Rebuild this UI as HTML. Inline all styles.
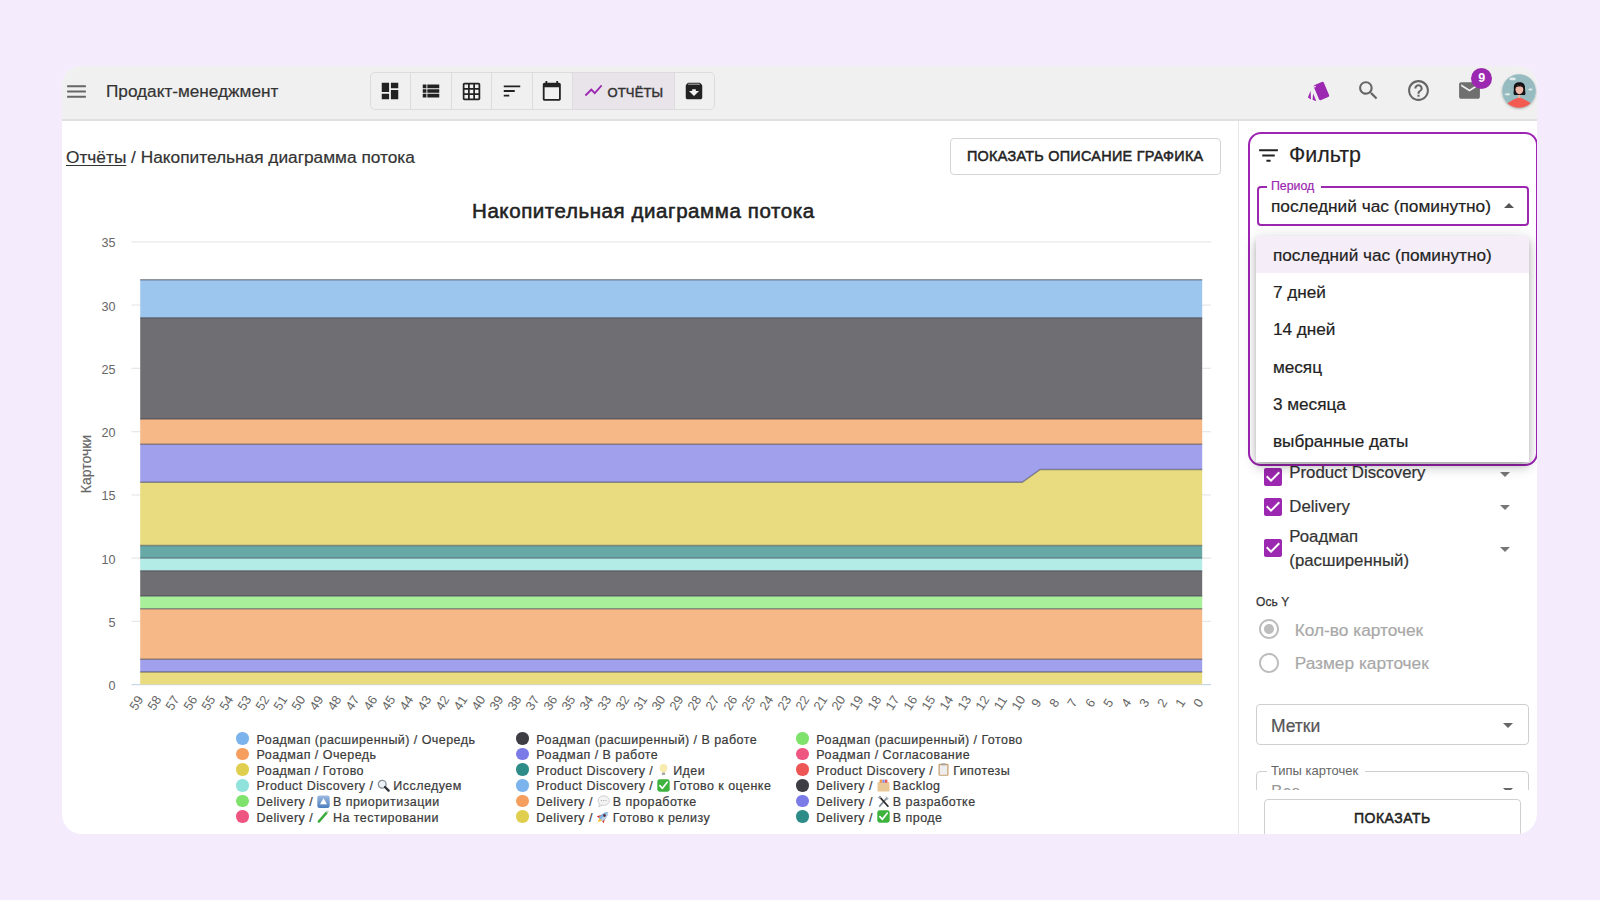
<!DOCTYPE html><html><head><meta charset="utf-8"><style>
*{margin:0;padding:0;box-sizing:border-box}
html,body{width:1600px;height:900px;overflow:hidden;background:#F4EBFC;font-family:"Liberation Sans",sans-serif;color:#222}
#win{position:absolute;left:62px;top:66px;width:1475px;height:768px;border-radius:20px;overflow:hidden;background:#fff}
.a{position:absolute}
.t{position:absolute;white-space:nowrap;line-height:1}
svg{position:absolute;overflow:visible}
</style></head><body><div id="win">
<div class="a" style="left:0.00px;top:0.00px;width:1475.00px;height:53.00px;background:#EFF0EF"></div>
<div class="a" style="left:0.00px;top:53.00px;width:1475.00px;height:2.00px;background:#DFE0DF"></div>
<svg style="left:2.00px;top:12.50px" width="25" height="25" viewBox="0 0 24 24"><path d="M3 18h18v-2H3v2zm0-5h18v-2H3v2zm0-7v2h18V6H3z" fill="#666"/></svg>
<div class="t" style="left:44.00px;top:17.34px;font-size:17.2px;color:#333;font-weight:400;letter-spacing:0px;-webkit-text-stroke:0.2px #333">Продакт-менеджмент</div>
<div class="a" style="left:308.00px;top:6.00px;width:344.50px;height:37.50px;border:1px solid #DCDCDC;border-radius:5px"></div>
<div class="a" style="left:510.50px;top:6.50px;width:102.00px;height:36.50px;background:#E9E4EA"></div>
<div class="a" style="left:347.80px;top:6.50px;width:1.00px;height:36.50px;background:#DCDCDC"></div>
<div class="a" style="left:388.80px;top:6.50px;width:1.00px;height:36.50px;background:#DCDCDC"></div>
<div class="a" style="left:429.00px;top:6.50px;width:1.00px;height:36.50px;background:#DCDCDC"></div>
<div class="a" style="left:469.60px;top:6.50px;width:1.00px;height:36.50px;background:#DCDCDC"></div>
<div class="a" style="left:510.20px;top:6.50px;width:1.00px;height:36.50px;background:#DCDCDC"></div>
<div class="a" style="left:612.20px;top:6.50px;width:1.00px;height:36.50px;background:#DCDCDC"></div>
<svg style="left:317.00px;top:13.50px" width="22" height="22" viewBox="0 0 24 24"><path d="M3 13h8V3H3v10zm0 8h8v-6H3v6zm10 0h8V11h-8v10zm0-18v6h8V3h-8z" fill="#222"/></svg>
<svg style="left:358.00px;top:14.00px" width="22" height="22" viewBox="0 0 24 24"><path d="M3 14h4v-4H3v4zm0 5h4v-4H3v4zM3 9h4V5H3v4zm5 5h13v-4H8v4zm0 5h13v-4H8v4zM8 5v4h13V5H8z" fill="#222"/></svg>
<svg style="left:398.50px;top:14.50px" width="21" height="21" viewBox="0 0 24 24"><path d="M20 2H4c-1.1 0-2 .9-2 2v16c0 1.1.9 2 2 2h16c1.1 0 2-.9 2-2V4c0-1.1-.9-2-2-2zM8 20H4v-4h4v4zm0-6H4v-4h4v4zm0-6H4V4h4v4zm6 12h-4v-4h4v4zm0-6h-4v-4h4v4zm0-6h-4V4h4v4zm6 12h-4v-4h4v4zm0-6h-4v-4h4v4zm0-6h-4V4h4v4z" fill="#222"/></svg>
<svg style="left:439.00px;top:13.50px" width="22" height="22" viewBox="0 0 24 24"><path d="M3 18h6v-2H3v2zM3 6v2h18V6H3zm0 7h12v-2H3v2z" fill="#222"/></svg>
<svg style="left:479.20px;top:13.60px" width="21.6" height="21.6" viewBox="0 0 24 24"><path d="M20 3h-1V1h-2v2H7V1H5v2H4c-1.1 0-2 .9-2 2v16c0 1.1.9 2 2 2h16c1.1 0 2-.9 2-2V5c0-1.1-.9-2-2-2zm0 18H4V8h16v13z" fill="#222"/></svg>
<svg style="left:520.50px;top:14.00px" width="21" height="21" viewBox="0 0 24 24"><path d="M3.5 18.49l6-6.01 4 4L22 6.92l-1.41-1.41-7.09 7.97-4-4L2 16.99z" fill="#9C27B0"/></svg>
<div class="t" style="left:545.50px;top:19.90px;font-size:13px;color:#333;font-weight:400;letter-spacing:0.15px;-webkit-text-stroke:0.5px #333">ОТЧЁТЫ</div>
<svg style="left:621.00px;top:14.00px" width="22" height="22" viewBox="0 0 24 24"><path d="M20.54 5.23l-1.39-1.68C18.88 3.21 18.47 3 18 3H6c-.47 0-.88.21-1.16.55L3.46 5.23C3.17 5.57 3 6.02 3 6.5V19c0 1.1.9 2 2 2h14c1.1 0 2-.9 2-2V6.5c0-.48-.17-.93-.46-1.27zM12 17.5L6.5 12H10v-2h4v2h3.5L12 17.5zM5.12 5l.81-1h12l.94 1H5.12z" fill="#222"/></svg>
<svg style="left:1238px;top:8px" width="40" height="32" viewBox="1300 74 40 32"><rect x="1316" y="82.75" width="10.9" height="16.5" rx="1.6" fill="#9C27B0" transform="rotate(-23 1321.4 91)"/><path d="M1310.6 90.8 L1307.9 97.4 L1311.0 99.4 Z" fill="#9C27B0"/><path d="M1313.1 93.4 L1312.6 99.8 L1316.3 101.2 Z" fill="#9C27B0"/><rect x="1314" y="85.8" width="1.8" height="1.6" fill="#E6CCEB" transform="rotate(-23 1314.9 86.6)"/></svg>
<svg style="left:1294.30px;top:12.30px" width="25" height="25" viewBox="0 0 24 24"><path d="M15.5 14h-.79l-.28-.27C15.41 12.59 16 11.11 16 9.5 16 5.91 13.09 3 9.5 3S3 5.91 3 9.5 5.91 16 9.5 16c1.61 0 3.09-.59 4.23-1.57l.27.28v.79l5 4.99L20.49 19l-4.99-5zm-6 0C7.01 14 5 11.99 5 9.5S7.01 5 9.5 5 14 7.01 14 9.5 11.99 14 9.5 14z" fill="#666"/></svg>
<svg style="left:1344.00px;top:11.80px" width="25" height="25" viewBox="0 0 24 24"><path d="M11 18h2v-2h-2v2zm1-16C6.48 2 2 6.48 2 12s4.48 10 10 10 10-4.48 10-10S17.52 2 12 2zm0 18c-4.41 0-8-3.59-8-8s3.59-8 8-8 8 3.59 8 8-3.59 8-8 8zm0-14c-2.21 0-4 1.79-4 4h2c0-1.1.9-2 2-2s2 .9 2 2c0 2-3 1.75-3 5h2c0-2.25 3-2.5 3-5 0-2.21-1.79-4-4-4z" fill="#666"/></svg>
<svg style="left:1394.90px;top:12.40px" width="25" height="25" viewBox="0 0 24 24"><path d="M20 4H4c-1.1 0-1.99.9-1.99 2L2 18c0 1.1.9 2 2 2h16c1.1 0 2-.9 2-2V6c0-1.1-.9-2-2-2zm0 4l-8 5-8-5V6l8 5 8-5v2z" fill="#6f6f6f"/></svg>
<div class="a" style="left:1409.2px;top:2.200000000000003px;width:21px;height:21px;border-radius:50%;background:#9C27B0;color:#fff;font-size:12.5px;font-weight:700;line-height:21px;text-align:center">9</div>
<svg style="left:1439.7px;top:8px" width="34" height="34" viewBox="0 0 34 34"><defs><clipPath id="av"><circle cx="17" cy="17" r="16.8"/></clipPath><filter id="avs" x="-30%" y="-30%" width="160%" height="160%"><feDropShadow dx="0" dy="1" stdDeviation="1" flood-opacity="0.3"/></filter></defs><circle cx="17" cy="17" r="16.8" fill="#96BCC1" filter="url(#avs)"/><g clip-path="url(#av)"><path d="M3.5 30.5 Q10 25.5 17 23.2 Q24 25.5 30.5 30.5 L30.5 36 L3.5 36 Z" fill="#F25A52"/><path d="M16.2 19 h2 v5 h-2z" fill="#F2B0A0"/><path d="M12.8 21.2 C10.5 20.5 12.2 17 11.8 14 C11.6 10 13.8 8.3 17.3 8.3 C21 8.3 23.2 10.2 23 14 C22.8 17 24.5 20.5 22.2 21.2 C20 21 15 21 12.8 21.2 Z" fill="#141214"/><ellipse cx="17.4" cy="15.6" rx="3.9" ry="4.6" fill="#F0B8A8"/><path d="M13.3 13.5 C14 10.5 20.5 10 21.5 13.5 C19.5 12 15.5 12 13.3 13.5Z" fill="#141214"/><ellipse cx="10.6" cy="4.9" rx="3.2" ry="1.3" fill="#E3EDEB"/><ellipse cx="28.5" cy="15.4" rx="2.1" ry="1.0" fill="#E3EDEB"/><ellipse cx="5.5" cy="20.3" rx="2.8" ry="1.1" fill="#E3EDEB"/></g></svg>
<div class="t" style="left:4.00px;top:82.76px;font-size:17.3px;color:#333;font-weight:400;letter-spacing:0px;-webkit-text-stroke:0.2px #333"><span style="text-decoration:underline;text-underline-offset:2px">Отчёты</span> / Накопительная диаграмма потока</div>
<div class="a" style="left:888.30px;top:71.70px;width:271.00px;height:37.20px;border:1px solid #D5D5D5;border-radius:4px"></div>
<div class="t" style="left:905.00px;top:82.51px;font-size:14.4px;color:#222;font-weight:400;letter-spacing:0.28px;-webkit-text-stroke:0.5px #222">ПОКАЗАТЬ ОПИСАНИЕ ГРАФИКА</div>
<div class="a" style="left:1176.30px;top:55.00px;width:1.00px;height:713.00px;background:#E6E6E6"></div>
<svg style="left:0;top:0" width="1475" height="768" viewBox="62 66 1475 768"><line x1="131.5" x2="1211" y1="684.60" y2="684.60" stroke="#C9D6EA" stroke-width="1.2"/><line x1="131.5" x2="1211" y1="621.35" y2="621.35" stroke="#E8E8E8" stroke-width="1.2"/><line x1="131.5" x2="1211" y1="558.10" y2="558.10" stroke="#E8E8E8" stroke-width="1.2"/><line x1="131.5" x2="1211" y1="494.85" y2="494.85" stroke="#E8E8E8" stroke-width="1.2"/><line x1="131.5" x2="1211" y1="431.60" y2="431.60" stroke="#E8E8E8" stroke-width="1.2"/><line x1="131.5" x2="1211" y1="368.35" y2="368.35" stroke="#E8E8E8" stroke-width="1.2"/><line x1="131.5" x2="1211" y1="305.10" y2="305.10" stroke="#E8E8E8" stroke-width="1.2"/><line x1="131.5" x2="1211" y1="241.85" y2="241.85" stroke="#E8E8E8" stroke-width="1.2"/><path d="M140.20 671.95 L158.20 671.95 L176.20 671.95 L194.20 671.95 L212.20 671.95 L230.20 671.95 L248.20 671.95 L266.20 671.95 L284.20 671.95 L302.20 671.95 L320.20 671.95 L338.20 671.95 L356.20 671.95 L374.20 671.95 L392.20 671.95 L410.20 671.95 L428.20 671.95 L446.20 671.95 L464.20 671.95 L482.20 671.95 L500.20 671.95 L518.20 671.95 L536.20 671.95 L554.20 671.95 L572.20 671.95 L590.20 671.95 L608.20 671.95 L626.20 671.95 L644.20 671.95 L662.20 671.95 L680.20 671.95 L698.20 671.95 L716.20 671.95 L734.20 671.95 L752.20 671.95 L770.20 671.95 L788.20 671.95 L806.20 671.95 L824.20 671.95 L842.20 671.95 L860.20 671.95 L878.20 671.95 L896.20 671.95 L914.20 671.95 L932.20 671.95 L950.20 671.95 L968.20 671.95 L986.20 671.95 L1004.20 671.95 L1022.20 671.95 L1040.20 671.95 L1058.20 671.95 L1076.20 671.95 L1094.20 671.95 L1112.20 671.95 L1130.20 671.95 L1148.20 671.95 L1166.20 671.95 L1184.20 671.95 L1202.20 671.95 L1202.20 684.60 L1184.20 684.60 L1166.20 684.60 L1148.20 684.60 L1130.20 684.60 L1112.20 684.60 L1094.20 684.60 L1076.20 684.60 L1058.20 684.60 L1040.20 684.60 L1022.20 684.60 L1004.20 684.60 L986.20 684.60 L968.20 684.60 L950.20 684.60 L932.20 684.60 L914.20 684.60 L896.20 684.60 L878.20 684.60 L860.20 684.60 L842.20 684.60 L824.20 684.60 L806.20 684.60 L788.20 684.60 L770.20 684.60 L752.20 684.60 L734.20 684.60 L716.20 684.60 L698.20 684.60 L680.20 684.60 L662.20 684.60 L644.20 684.60 L626.20 684.60 L608.20 684.60 L590.20 684.60 L572.20 684.60 L554.20 684.60 L536.20 684.60 L518.20 684.60 L500.20 684.60 L482.20 684.60 L464.20 684.60 L446.20 684.60 L428.20 684.60 L410.20 684.60 L392.20 684.60 L374.20 684.60 L356.20 684.60 L338.20 684.60 L320.20 684.60 L302.20 684.60 L284.20 684.60 L266.20 684.60 L248.20 684.60 L230.20 684.60 L212.20 684.60 L194.20 684.60 L176.20 684.60 L158.20 684.60 L140.20 684.60Z" fill="#E9DC80"/><path d="M140.20 659.30 L158.20 659.30 L176.20 659.30 L194.20 659.30 L212.20 659.30 L230.20 659.30 L248.20 659.30 L266.20 659.30 L284.20 659.30 L302.20 659.30 L320.20 659.30 L338.20 659.30 L356.20 659.30 L374.20 659.30 L392.20 659.30 L410.20 659.30 L428.20 659.30 L446.20 659.30 L464.20 659.30 L482.20 659.30 L500.20 659.30 L518.20 659.30 L536.20 659.30 L554.20 659.30 L572.20 659.30 L590.20 659.30 L608.20 659.30 L626.20 659.30 L644.20 659.30 L662.20 659.30 L680.20 659.30 L698.20 659.30 L716.20 659.30 L734.20 659.30 L752.20 659.30 L770.20 659.30 L788.20 659.30 L806.20 659.30 L824.20 659.30 L842.20 659.30 L860.20 659.30 L878.20 659.30 L896.20 659.30 L914.20 659.30 L932.20 659.30 L950.20 659.30 L968.20 659.30 L986.20 659.30 L1004.20 659.30 L1022.20 659.30 L1040.20 659.30 L1058.20 659.30 L1076.20 659.30 L1094.20 659.30 L1112.20 659.30 L1130.20 659.30 L1148.20 659.30 L1166.20 659.30 L1184.20 659.30 L1202.20 659.30 L1202.20 671.95 L1184.20 671.95 L1166.20 671.95 L1148.20 671.95 L1130.20 671.95 L1112.20 671.95 L1094.20 671.95 L1076.20 671.95 L1058.20 671.95 L1040.20 671.95 L1022.20 671.95 L1004.20 671.95 L986.20 671.95 L968.20 671.95 L950.20 671.95 L932.20 671.95 L914.20 671.95 L896.20 671.95 L878.20 671.95 L860.20 671.95 L842.20 671.95 L824.20 671.95 L806.20 671.95 L788.20 671.95 L770.20 671.95 L752.20 671.95 L734.20 671.95 L716.20 671.95 L698.20 671.95 L680.20 671.95 L662.20 671.95 L644.20 671.95 L626.20 671.95 L608.20 671.95 L590.20 671.95 L572.20 671.95 L554.20 671.95 L536.20 671.95 L518.20 671.95 L500.20 671.95 L482.20 671.95 L464.20 671.95 L446.20 671.95 L428.20 671.95 L410.20 671.95 L392.20 671.95 L374.20 671.95 L356.20 671.95 L338.20 671.95 L320.20 671.95 L302.20 671.95 L284.20 671.95 L266.20 671.95 L248.20 671.95 L230.20 671.95 L212.20 671.95 L194.20 671.95 L176.20 671.95 L158.20 671.95 L140.20 671.95Z" fill="#A0A0EC"/><path d="M140.20 608.70 L158.20 608.70 L176.20 608.70 L194.20 608.70 L212.20 608.70 L230.20 608.70 L248.20 608.70 L266.20 608.70 L284.20 608.70 L302.20 608.70 L320.20 608.70 L338.20 608.70 L356.20 608.70 L374.20 608.70 L392.20 608.70 L410.20 608.70 L428.20 608.70 L446.20 608.70 L464.20 608.70 L482.20 608.70 L500.20 608.70 L518.20 608.70 L536.20 608.70 L554.20 608.70 L572.20 608.70 L590.20 608.70 L608.20 608.70 L626.20 608.70 L644.20 608.70 L662.20 608.70 L680.20 608.70 L698.20 608.70 L716.20 608.70 L734.20 608.70 L752.20 608.70 L770.20 608.70 L788.20 608.70 L806.20 608.70 L824.20 608.70 L842.20 608.70 L860.20 608.70 L878.20 608.70 L896.20 608.70 L914.20 608.70 L932.20 608.70 L950.20 608.70 L968.20 608.70 L986.20 608.70 L1004.20 608.70 L1022.20 608.70 L1040.20 608.70 L1058.20 608.70 L1076.20 608.70 L1094.20 608.70 L1112.20 608.70 L1130.20 608.70 L1148.20 608.70 L1166.20 608.70 L1184.20 608.70 L1202.20 608.70 L1202.20 659.30 L1184.20 659.30 L1166.20 659.30 L1148.20 659.30 L1130.20 659.30 L1112.20 659.30 L1094.20 659.30 L1076.20 659.30 L1058.20 659.30 L1040.20 659.30 L1022.20 659.30 L1004.20 659.30 L986.20 659.30 L968.20 659.30 L950.20 659.30 L932.20 659.30 L914.20 659.30 L896.20 659.30 L878.20 659.30 L860.20 659.30 L842.20 659.30 L824.20 659.30 L806.20 659.30 L788.20 659.30 L770.20 659.30 L752.20 659.30 L734.20 659.30 L716.20 659.30 L698.20 659.30 L680.20 659.30 L662.20 659.30 L644.20 659.30 L626.20 659.30 L608.20 659.30 L590.20 659.30 L572.20 659.30 L554.20 659.30 L536.20 659.30 L518.20 659.30 L500.20 659.30 L482.20 659.30 L464.20 659.30 L446.20 659.30 L428.20 659.30 L410.20 659.30 L392.20 659.30 L374.20 659.30 L356.20 659.30 L338.20 659.30 L320.20 659.30 L302.20 659.30 L284.20 659.30 L266.20 659.30 L248.20 659.30 L230.20 659.30 L212.20 659.30 L194.20 659.30 L176.20 659.30 L158.20 659.30 L140.20 659.30Z" fill="#F6B886"/><path d="M140.20 596.05 L158.20 596.05 L176.20 596.05 L194.20 596.05 L212.20 596.05 L230.20 596.05 L248.20 596.05 L266.20 596.05 L284.20 596.05 L302.20 596.05 L320.20 596.05 L338.20 596.05 L356.20 596.05 L374.20 596.05 L392.20 596.05 L410.20 596.05 L428.20 596.05 L446.20 596.05 L464.20 596.05 L482.20 596.05 L500.20 596.05 L518.20 596.05 L536.20 596.05 L554.20 596.05 L572.20 596.05 L590.20 596.05 L608.20 596.05 L626.20 596.05 L644.20 596.05 L662.20 596.05 L680.20 596.05 L698.20 596.05 L716.20 596.05 L734.20 596.05 L752.20 596.05 L770.20 596.05 L788.20 596.05 L806.20 596.05 L824.20 596.05 L842.20 596.05 L860.20 596.05 L878.20 596.05 L896.20 596.05 L914.20 596.05 L932.20 596.05 L950.20 596.05 L968.20 596.05 L986.20 596.05 L1004.20 596.05 L1022.20 596.05 L1040.20 596.05 L1058.20 596.05 L1076.20 596.05 L1094.20 596.05 L1112.20 596.05 L1130.20 596.05 L1148.20 596.05 L1166.20 596.05 L1184.20 596.05 L1202.20 596.05 L1202.20 608.70 L1184.20 608.70 L1166.20 608.70 L1148.20 608.70 L1130.20 608.70 L1112.20 608.70 L1094.20 608.70 L1076.20 608.70 L1058.20 608.70 L1040.20 608.70 L1022.20 608.70 L1004.20 608.70 L986.20 608.70 L968.20 608.70 L950.20 608.70 L932.20 608.70 L914.20 608.70 L896.20 608.70 L878.20 608.70 L860.20 608.70 L842.20 608.70 L824.20 608.70 L806.20 608.70 L788.20 608.70 L770.20 608.70 L752.20 608.70 L734.20 608.70 L716.20 608.70 L698.20 608.70 L680.20 608.70 L662.20 608.70 L644.20 608.70 L626.20 608.70 L608.20 608.70 L590.20 608.70 L572.20 608.70 L554.20 608.70 L536.20 608.70 L518.20 608.70 L500.20 608.70 L482.20 608.70 L464.20 608.70 L446.20 608.70 L428.20 608.70 L410.20 608.70 L392.20 608.70 L374.20 608.70 L356.20 608.70 L338.20 608.70 L320.20 608.70 L302.20 608.70 L284.20 608.70 L266.20 608.70 L248.20 608.70 L230.20 608.70 L212.20 608.70 L194.20 608.70 L176.20 608.70 L158.20 608.70 L140.20 608.70Z" fill="#A9F09B"/><path d="M140.20 570.75 L158.20 570.75 L176.20 570.75 L194.20 570.75 L212.20 570.75 L230.20 570.75 L248.20 570.75 L266.20 570.75 L284.20 570.75 L302.20 570.75 L320.20 570.75 L338.20 570.75 L356.20 570.75 L374.20 570.75 L392.20 570.75 L410.20 570.75 L428.20 570.75 L446.20 570.75 L464.20 570.75 L482.20 570.75 L500.20 570.75 L518.20 570.75 L536.20 570.75 L554.20 570.75 L572.20 570.75 L590.20 570.75 L608.20 570.75 L626.20 570.75 L644.20 570.75 L662.20 570.75 L680.20 570.75 L698.20 570.75 L716.20 570.75 L734.20 570.75 L752.20 570.75 L770.20 570.75 L788.20 570.75 L806.20 570.75 L824.20 570.75 L842.20 570.75 L860.20 570.75 L878.20 570.75 L896.20 570.75 L914.20 570.75 L932.20 570.75 L950.20 570.75 L968.20 570.75 L986.20 570.75 L1004.20 570.75 L1022.20 570.75 L1040.20 570.75 L1058.20 570.75 L1076.20 570.75 L1094.20 570.75 L1112.20 570.75 L1130.20 570.75 L1148.20 570.75 L1166.20 570.75 L1184.20 570.75 L1202.20 570.75 L1202.20 596.05 L1184.20 596.05 L1166.20 596.05 L1148.20 596.05 L1130.20 596.05 L1112.20 596.05 L1094.20 596.05 L1076.20 596.05 L1058.20 596.05 L1040.20 596.05 L1022.20 596.05 L1004.20 596.05 L986.20 596.05 L968.20 596.05 L950.20 596.05 L932.20 596.05 L914.20 596.05 L896.20 596.05 L878.20 596.05 L860.20 596.05 L842.20 596.05 L824.20 596.05 L806.20 596.05 L788.20 596.05 L770.20 596.05 L752.20 596.05 L734.20 596.05 L716.20 596.05 L698.20 596.05 L680.20 596.05 L662.20 596.05 L644.20 596.05 L626.20 596.05 L608.20 596.05 L590.20 596.05 L572.20 596.05 L554.20 596.05 L536.20 596.05 L518.20 596.05 L500.20 596.05 L482.20 596.05 L464.20 596.05 L446.20 596.05 L428.20 596.05 L410.20 596.05 L392.20 596.05 L374.20 596.05 L356.20 596.05 L338.20 596.05 L320.20 596.05 L302.20 596.05 L284.20 596.05 L266.20 596.05 L248.20 596.05 L230.20 596.05 L212.20 596.05 L194.20 596.05 L176.20 596.05 L158.20 596.05 L140.20 596.05Z" fill="#6F6E73"/><path d="M140.20 558.10 L158.20 558.10 L176.20 558.10 L194.20 558.10 L212.20 558.10 L230.20 558.10 L248.20 558.10 L266.20 558.10 L284.20 558.10 L302.20 558.10 L320.20 558.10 L338.20 558.10 L356.20 558.10 L374.20 558.10 L392.20 558.10 L410.20 558.10 L428.20 558.10 L446.20 558.10 L464.20 558.10 L482.20 558.10 L500.20 558.10 L518.20 558.10 L536.20 558.10 L554.20 558.10 L572.20 558.10 L590.20 558.10 L608.20 558.10 L626.20 558.10 L644.20 558.10 L662.20 558.10 L680.20 558.10 L698.20 558.10 L716.20 558.10 L734.20 558.10 L752.20 558.10 L770.20 558.10 L788.20 558.10 L806.20 558.10 L824.20 558.10 L842.20 558.10 L860.20 558.10 L878.20 558.10 L896.20 558.10 L914.20 558.10 L932.20 558.10 L950.20 558.10 L968.20 558.10 L986.20 558.10 L1004.20 558.10 L1022.20 558.10 L1040.20 558.10 L1058.20 558.10 L1076.20 558.10 L1094.20 558.10 L1112.20 558.10 L1130.20 558.10 L1148.20 558.10 L1166.20 558.10 L1184.20 558.10 L1202.20 558.10 L1202.20 570.75 L1184.20 570.75 L1166.20 570.75 L1148.20 570.75 L1130.20 570.75 L1112.20 570.75 L1094.20 570.75 L1076.20 570.75 L1058.20 570.75 L1040.20 570.75 L1022.20 570.75 L1004.20 570.75 L986.20 570.75 L968.20 570.75 L950.20 570.75 L932.20 570.75 L914.20 570.75 L896.20 570.75 L878.20 570.75 L860.20 570.75 L842.20 570.75 L824.20 570.75 L806.20 570.75 L788.20 570.75 L770.20 570.75 L752.20 570.75 L734.20 570.75 L716.20 570.75 L698.20 570.75 L680.20 570.75 L662.20 570.75 L644.20 570.75 L626.20 570.75 L608.20 570.75 L590.20 570.75 L572.20 570.75 L554.20 570.75 L536.20 570.75 L518.20 570.75 L500.20 570.75 L482.20 570.75 L464.20 570.75 L446.20 570.75 L428.20 570.75 L410.20 570.75 L392.20 570.75 L374.20 570.75 L356.20 570.75 L338.20 570.75 L320.20 570.75 L302.20 570.75 L284.20 570.75 L266.20 570.75 L248.20 570.75 L230.20 570.75 L212.20 570.75 L194.20 570.75 L176.20 570.75 L158.20 570.75 L140.20 570.75Z" fill="#B3EBE6"/><path d="M140.20 545.45 L158.20 545.45 L176.20 545.45 L194.20 545.45 L212.20 545.45 L230.20 545.45 L248.20 545.45 L266.20 545.45 L284.20 545.45 L302.20 545.45 L320.20 545.45 L338.20 545.45 L356.20 545.45 L374.20 545.45 L392.20 545.45 L410.20 545.45 L428.20 545.45 L446.20 545.45 L464.20 545.45 L482.20 545.45 L500.20 545.45 L518.20 545.45 L536.20 545.45 L554.20 545.45 L572.20 545.45 L590.20 545.45 L608.20 545.45 L626.20 545.45 L644.20 545.45 L662.20 545.45 L680.20 545.45 L698.20 545.45 L716.20 545.45 L734.20 545.45 L752.20 545.45 L770.20 545.45 L788.20 545.45 L806.20 545.45 L824.20 545.45 L842.20 545.45 L860.20 545.45 L878.20 545.45 L896.20 545.45 L914.20 545.45 L932.20 545.45 L950.20 545.45 L968.20 545.45 L986.20 545.45 L1004.20 545.45 L1022.20 545.45 L1040.20 545.45 L1058.20 545.45 L1076.20 545.45 L1094.20 545.45 L1112.20 545.45 L1130.20 545.45 L1148.20 545.45 L1166.20 545.45 L1184.20 545.45 L1202.20 545.45 L1202.20 558.10 L1184.20 558.10 L1166.20 558.10 L1148.20 558.10 L1130.20 558.10 L1112.20 558.10 L1094.20 558.10 L1076.20 558.10 L1058.20 558.10 L1040.20 558.10 L1022.20 558.10 L1004.20 558.10 L986.20 558.10 L968.20 558.10 L950.20 558.10 L932.20 558.10 L914.20 558.10 L896.20 558.10 L878.20 558.10 L860.20 558.10 L842.20 558.10 L824.20 558.10 L806.20 558.10 L788.20 558.10 L770.20 558.10 L752.20 558.10 L734.20 558.10 L716.20 558.10 L698.20 558.10 L680.20 558.10 L662.20 558.10 L644.20 558.10 L626.20 558.10 L608.20 558.10 L590.20 558.10 L572.20 558.10 L554.20 558.10 L536.20 558.10 L518.20 558.10 L500.20 558.10 L482.20 558.10 L464.20 558.10 L446.20 558.10 L428.20 558.10 L410.20 558.10 L392.20 558.10 L374.20 558.10 L356.20 558.10 L338.20 558.10 L320.20 558.10 L302.20 558.10 L284.20 558.10 L266.20 558.10 L248.20 558.10 L230.20 558.10 L212.20 558.10 L194.20 558.10 L176.20 558.10 L158.20 558.10 L140.20 558.10Z" fill="#67A9A7"/><path d="M140.20 482.20 L158.20 482.20 L176.20 482.20 L194.20 482.20 L212.20 482.20 L230.20 482.20 L248.20 482.20 L266.20 482.20 L284.20 482.20 L302.20 482.20 L320.20 482.20 L338.20 482.20 L356.20 482.20 L374.20 482.20 L392.20 482.20 L410.20 482.20 L428.20 482.20 L446.20 482.20 L464.20 482.20 L482.20 482.20 L500.20 482.20 L518.20 482.20 L536.20 482.20 L554.20 482.20 L572.20 482.20 L590.20 482.20 L608.20 482.20 L626.20 482.20 L644.20 482.20 L662.20 482.20 L680.20 482.20 L698.20 482.20 L716.20 482.20 L734.20 482.20 L752.20 482.20 L770.20 482.20 L788.20 482.20 L806.20 482.20 L824.20 482.20 L842.20 482.20 L860.20 482.20 L878.20 482.20 L896.20 482.20 L914.20 482.20 L932.20 482.20 L950.20 482.20 L968.20 482.20 L986.20 482.20 L1004.20 482.20 L1022.20 482.20 L1040.20 469.55 L1058.20 469.55 L1076.20 469.55 L1094.20 469.55 L1112.20 469.55 L1130.20 469.55 L1148.20 469.55 L1166.20 469.55 L1184.20 469.55 L1202.20 469.55 L1202.20 545.45 L1184.20 545.45 L1166.20 545.45 L1148.20 545.45 L1130.20 545.45 L1112.20 545.45 L1094.20 545.45 L1076.20 545.45 L1058.20 545.45 L1040.20 545.45 L1022.20 545.45 L1004.20 545.45 L986.20 545.45 L968.20 545.45 L950.20 545.45 L932.20 545.45 L914.20 545.45 L896.20 545.45 L878.20 545.45 L860.20 545.45 L842.20 545.45 L824.20 545.45 L806.20 545.45 L788.20 545.45 L770.20 545.45 L752.20 545.45 L734.20 545.45 L716.20 545.45 L698.20 545.45 L680.20 545.45 L662.20 545.45 L644.20 545.45 L626.20 545.45 L608.20 545.45 L590.20 545.45 L572.20 545.45 L554.20 545.45 L536.20 545.45 L518.20 545.45 L500.20 545.45 L482.20 545.45 L464.20 545.45 L446.20 545.45 L428.20 545.45 L410.20 545.45 L392.20 545.45 L374.20 545.45 L356.20 545.45 L338.20 545.45 L320.20 545.45 L302.20 545.45 L284.20 545.45 L266.20 545.45 L248.20 545.45 L230.20 545.45 L212.20 545.45 L194.20 545.45 L176.20 545.45 L158.20 545.45 L140.20 545.45Z" fill="#E9DC80"/><path d="M140.20 444.25 L158.20 444.25 L176.20 444.25 L194.20 444.25 L212.20 444.25 L230.20 444.25 L248.20 444.25 L266.20 444.25 L284.20 444.25 L302.20 444.25 L320.20 444.25 L338.20 444.25 L356.20 444.25 L374.20 444.25 L392.20 444.25 L410.20 444.25 L428.20 444.25 L446.20 444.25 L464.20 444.25 L482.20 444.25 L500.20 444.25 L518.20 444.25 L536.20 444.25 L554.20 444.25 L572.20 444.25 L590.20 444.25 L608.20 444.25 L626.20 444.25 L644.20 444.25 L662.20 444.25 L680.20 444.25 L698.20 444.25 L716.20 444.25 L734.20 444.25 L752.20 444.25 L770.20 444.25 L788.20 444.25 L806.20 444.25 L824.20 444.25 L842.20 444.25 L860.20 444.25 L878.20 444.25 L896.20 444.25 L914.20 444.25 L932.20 444.25 L950.20 444.25 L968.20 444.25 L986.20 444.25 L1004.20 444.25 L1022.20 444.25 L1040.20 444.25 L1058.20 444.25 L1076.20 444.25 L1094.20 444.25 L1112.20 444.25 L1130.20 444.25 L1148.20 444.25 L1166.20 444.25 L1184.20 444.25 L1202.20 444.25 L1202.20 469.55 L1184.20 469.55 L1166.20 469.55 L1148.20 469.55 L1130.20 469.55 L1112.20 469.55 L1094.20 469.55 L1076.20 469.55 L1058.20 469.55 L1040.20 469.55 L1022.20 482.20 L1004.20 482.20 L986.20 482.20 L968.20 482.20 L950.20 482.20 L932.20 482.20 L914.20 482.20 L896.20 482.20 L878.20 482.20 L860.20 482.20 L842.20 482.20 L824.20 482.20 L806.20 482.20 L788.20 482.20 L770.20 482.20 L752.20 482.20 L734.20 482.20 L716.20 482.20 L698.20 482.20 L680.20 482.20 L662.20 482.20 L644.20 482.20 L626.20 482.20 L608.20 482.20 L590.20 482.20 L572.20 482.20 L554.20 482.20 L536.20 482.20 L518.20 482.20 L500.20 482.20 L482.20 482.20 L464.20 482.20 L446.20 482.20 L428.20 482.20 L410.20 482.20 L392.20 482.20 L374.20 482.20 L356.20 482.20 L338.20 482.20 L320.20 482.20 L302.20 482.20 L284.20 482.20 L266.20 482.20 L248.20 482.20 L230.20 482.20 L212.20 482.20 L194.20 482.20 L176.20 482.20 L158.20 482.20 L140.20 482.20Z" fill="#A0A0EC"/><path d="M140.20 418.95 L158.20 418.95 L176.20 418.95 L194.20 418.95 L212.20 418.95 L230.20 418.95 L248.20 418.95 L266.20 418.95 L284.20 418.95 L302.20 418.95 L320.20 418.95 L338.20 418.95 L356.20 418.95 L374.20 418.95 L392.20 418.95 L410.20 418.95 L428.20 418.95 L446.20 418.95 L464.20 418.95 L482.20 418.95 L500.20 418.95 L518.20 418.95 L536.20 418.95 L554.20 418.95 L572.20 418.95 L590.20 418.95 L608.20 418.95 L626.20 418.95 L644.20 418.95 L662.20 418.95 L680.20 418.95 L698.20 418.95 L716.20 418.95 L734.20 418.95 L752.20 418.95 L770.20 418.95 L788.20 418.95 L806.20 418.95 L824.20 418.95 L842.20 418.95 L860.20 418.95 L878.20 418.95 L896.20 418.95 L914.20 418.95 L932.20 418.95 L950.20 418.95 L968.20 418.95 L986.20 418.95 L1004.20 418.95 L1022.20 418.95 L1040.20 418.95 L1058.20 418.95 L1076.20 418.95 L1094.20 418.95 L1112.20 418.95 L1130.20 418.95 L1148.20 418.95 L1166.20 418.95 L1184.20 418.95 L1202.20 418.95 L1202.20 444.25 L1184.20 444.25 L1166.20 444.25 L1148.20 444.25 L1130.20 444.25 L1112.20 444.25 L1094.20 444.25 L1076.20 444.25 L1058.20 444.25 L1040.20 444.25 L1022.20 444.25 L1004.20 444.25 L986.20 444.25 L968.20 444.25 L950.20 444.25 L932.20 444.25 L914.20 444.25 L896.20 444.25 L878.20 444.25 L860.20 444.25 L842.20 444.25 L824.20 444.25 L806.20 444.25 L788.20 444.25 L770.20 444.25 L752.20 444.25 L734.20 444.25 L716.20 444.25 L698.20 444.25 L680.20 444.25 L662.20 444.25 L644.20 444.25 L626.20 444.25 L608.20 444.25 L590.20 444.25 L572.20 444.25 L554.20 444.25 L536.20 444.25 L518.20 444.25 L500.20 444.25 L482.20 444.25 L464.20 444.25 L446.20 444.25 L428.20 444.25 L410.20 444.25 L392.20 444.25 L374.20 444.25 L356.20 444.25 L338.20 444.25 L320.20 444.25 L302.20 444.25 L284.20 444.25 L266.20 444.25 L248.20 444.25 L230.20 444.25 L212.20 444.25 L194.20 444.25 L176.20 444.25 L158.20 444.25 L140.20 444.25Z" fill="#F6B886"/><path d="M140.20 317.75 L158.20 317.75 L176.20 317.75 L194.20 317.75 L212.20 317.75 L230.20 317.75 L248.20 317.75 L266.20 317.75 L284.20 317.75 L302.20 317.75 L320.20 317.75 L338.20 317.75 L356.20 317.75 L374.20 317.75 L392.20 317.75 L410.20 317.75 L428.20 317.75 L446.20 317.75 L464.20 317.75 L482.20 317.75 L500.20 317.75 L518.20 317.75 L536.20 317.75 L554.20 317.75 L572.20 317.75 L590.20 317.75 L608.20 317.75 L626.20 317.75 L644.20 317.75 L662.20 317.75 L680.20 317.75 L698.20 317.75 L716.20 317.75 L734.20 317.75 L752.20 317.75 L770.20 317.75 L788.20 317.75 L806.20 317.75 L824.20 317.75 L842.20 317.75 L860.20 317.75 L878.20 317.75 L896.20 317.75 L914.20 317.75 L932.20 317.75 L950.20 317.75 L968.20 317.75 L986.20 317.75 L1004.20 317.75 L1022.20 317.75 L1040.20 317.75 L1058.20 317.75 L1076.20 317.75 L1094.20 317.75 L1112.20 317.75 L1130.20 317.75 L1148.20 317.75 L1166.20 317.75 L1184.20 317.75 L1202.20 317.75 L1202.20 418.95 L1184.20 418.95 L1166.20 418.95 L1148.20 418.95 L1130.20 418.95 L1112.20 418.95 L1094.20 418.95 L1076.20 418.95 L1058.20 418.95 L1040.20 418.95 L1022.20 418.95 L1004.20 418.95 L986.20 418.95 L968.20 418.95 L950.20 418.95 L932.20 418.95 L914.20 418.95 L896.20 418.95 L878.20 418.95 L860.20 418.95 L842.20 418.95 L824.20 418.95 L806.20 418.95 L788.20 418.95 L770.20 418.95 L752.20 418.95 L734.20 418.95 L716.20 418.95 L698.20 418.95 L680.20 418.95 L662.20 418.95 L644.20 418.95 L626.20 418.95 L608.20 418.95 L590.20 418.95 L572.20 418.95 L554.20 418.95 L536.20 418.95 L518.20 418.95 L500.20 418.95 L482.20 418.95 L464.20 418.95 L446.20 418.95 L428.20 418.95 L410.20 418.95 L392.20 418.95 L374.20 418.95 L356.20 418.95 L338.20 418.95 L320.20 418.95 L302.20 418.95 L284.20 418.95 L266.20 418.95 L248.20 418.95 L230.20 418.95 L212.20 418.95 L194.20 418.95 L176.20 418.95 L158.20 418.95 L140.20 418.95Z" fill="#6F6E73"/><path d="M140.20 279.80 L158.20 279.80 L176.20 279.80 L194.20 279.80 L212.20 279.80 L230.20 279.80 L248.20 279.80 L266.20 279.80 L284.20 279.80 L302.20 279.80 L320.20 279.80 L338.20 279.80 L356.20 279.80 L374.20 279.80 L392.20 279.80 L410.20 279.80 L428.20 279.80 L446.20 279.80 L464.20 279.80 L482.20 279.80 L500.20 279.80 L518.20 279.80 L536.20 279.80 L554.20 279.80 L572.20 279.80 L590.20 279.80 L608.20 279.80 L626.20 279.80 L644.20 279.80 L662.20 279.80 L680.20 279.80 L698.20 279.80 L716.20 279.80 L734.20 279.80 L752.20 279.80 L770.20 279.80 L788.20 279.80 L806.20 279.80 L824.20 279.80 L842.20 279.80 L860.20 279.80 L878.20 279.80 L896.20 279.80 L914.20 279.80 L932.20 279.80 L950.20 279.80 L968.20 279.80 L986.20 279.80 L1004.20 279.80 L1022.20 279.80 L1040.20 279.80 L1058.20 279.80 L1076.20 279.80 L1094.20 279.80 L1112.20 279.80 L1130.20 279.80 L1148.20 279.80 L1166.20 279.80 L1184.20 279.80 L1202.20 279.80 L1202.20 317.75 L1184.20 317.75 L1166.20 317.75 L1148.20 317.75 L1130.20 317.75 L1112.20 317.75 L1094.20 317.75 L1076.20 317.75 L1058.20 317.75 L1040.20 317.75 L1022.20 317.75 L1004.20 317.75 L986.20 317.75 L968.20 317.75 L950.20 317.75 L932.20 317.75 L914.20 317.75 L896.20 317.75 L878.20 317.75 L860.20 317.75 L842.20 317.75 L824.20 317.75 L806.20 317.75 L788.20 317.75 L770.20 317.75 L752.20 317.75 L734.20 317.75 L716.20 317.75 L698.20 317.75 L680.20 317.75 L662.20 317.75 L644.20 317.75 L626.20 317.75 L608.20 317.75 L590.20 317.75 L572.20 317.75 L554.20 317.75 L536.20 317.75 L518.20 317.75 L500.20 317.75 L482.20 317.75 L464.20 317.75 L446.20 317.75 L428.20 317.75 L410.20 317.75 L392.20 317.75 L374.20 317.75 L356.20 317.75 L338.20 317.75 L320.20 317.75 L302.20 317.75 L284.20 317.75 L266.20 317.75 L248.20 317.75 L230.20 317.75 L212.20 317.75 L194.20 317.75 L176.20 317.75 L158.20 317.75 L140.20 317.75Z" fill="#9DC6EF"/><path d="M140.20 671.95 L158.20 671.95 L176.20 671.95 L194.20 671.95 L212.20 671.95 L230.20 671.95 L248.20 671.95 L266.20 671.95 L284.20 671.95 L302.20 671.95 L320.20 671.95 L338.20 671.95 L356.20 671.95 L374.20 671.95 L392.20 671.95 L410.20 671.95 L428.20 671.95 L446.20 671.95 L464.20 671.95 L482.20 671.95 L500.20 671.95 L518.20 671.95 L536.20 671.95 L554.20 671.95 L572.20 671.95 L590.20 671.95 L608.20 671.95 L626.20 671.95 L644.20 671.95 L662.20 671.95 L680.20 671.95 L698.20 671.95 L716.20 671.95 L734.20 671.95 L752.20 671.95 L770.20 671.95 L788.20 671.95 L806.20 671.95 L824.20 671.95 L842.20 671.95 L860.20 671.95 L878.20 671.95 L896.20 671.95 L914.20 671.95 L932.20 671.95 L950.20 671.95 L968.20 671.95 L986.20 671.95 L1004.20 671.95 L1022.20 671.95 L1040.20 671.95 L1058.20 671.95 L1076.20 671.95 L1094.20 671.95 L1112.20 671.95 L1130.20 671.95 L1148.20 671.95 L1166.20 671.95 L1184.20 671.95 L1202.20 671.95" fill="none" stroke="rgba(70,70,80,0.55)" stroke-width="1.4"/><path d="M140.20 659.30 L158.20 659.30 L176.20 659.30 L194.20 659.30 L212.20 659.30 L230.20 659.30 L248.20 659.30 L266.20 659.30 L284.20 659.30 L302.20 659.30 L320.20 659.30 L338.20 659.30 L356.20 659.30 L374.20 659.30 L392.20 659.30 L410.20 659.30 L428.20 659.30 L446.20 659.30 L464.20 659.30 L482.20 659.30 L500.20 659.30 L518.20 659.30 L536.20 659.30 L554.20 659.30 L572.20 659.30 L590.20 659.30 L608.20 659.30 L626.20 659.30 L644.20 659.30 L662.20 659.30 L680.20 659.30 L698.20 659.30 L716.20 659.30 L734.20 659.30 L752.20 659.30 L770.20 659.30 L788.20 659.30 L806.20 659.30 L824.20 659.30 L842.20 659.30 L860.20 659.30 L878.20 659.30 L896.20 659.30 L914.20 659.30 L932.20 659.30 L950.20 659.30 L968.20 659.30 L986.20 659.30 L1004.20 659.30 L1022.20 659.30 L1040.20 659.30 L1058.20 659.30 L1076.20 659.30 L1094.20 659.30 L1112.20 659.30 L1130.20 659.30 L1148.20 659.30 L1166.20 659.30 L1184.20 659.30 L1202.20 659.30" fill="none" stroke="rgba(70,70,80,0.55)" stroke-width="1.4"/><path d="M140.20 608.70 L158.20 608.70 L176.20 608.70 L194.20 608.70 L212.20 608.70 L230.20 608.70 L248.20 608.70 L266.20 608.70 L284.20 608.70 L302.20 608.70 L320.20 608.70 L338.20 608.70 L356.20 608.70 L374.20 608.70 L392.20 608.70 L410.20 608.70 L428.20 608.70 L446.20 608.70 L464.20 608.70 L482.20 608.70 L500.20 608.70 L518.20 608.70 L536.20 608.70 L554.20 608.70 L572.20 608.70 L590.20 608.70 L608.20 608.70 L626.20 608.70 L644.20 608.70 L662.20 608.70 L680.20 608.70 L698.20 608.70 L716.20 608.70 L734.20 608.70 L752.20 608.70 L770.20 608.70 L788.20 608.70 L806.20 608.70 L824.20 608.70 L842.20 608.70 L860.20 608.70 L878.20 608.70 L896.20 608.70 L914.20 608.70 L932.20 608.70 L950.20 608.70 L968.20 608.70 L986.20 608.70 L1004.20 608.70 L1022.20 608.70 L1040.20 608.70 L1058.20 608.70 L1076.20 608.70 L1094.20 608.70 L1112.20 608.70 L1130.20 608.70 L1148.20 608.70 L1166.20 608.70 L1184.20 608.70 L1202.20 608.70" fill="none" stroke="rgba(70,70,80,0.55)" stroke-width="1.4"/><path d="M140.20 596.05 L158.20 596.05 L176.20 596.05 L194.20 596.05 L212.20 596.05 L230.20 596.05 L248.20 596.05 L266.20 596.05 L284.20 596.05 L302.20 596.05 L320.20 596.05 L338.20 596.05 L356.20 596.05 L374.20 596.05 L392.20 596.05 L410.20 596.05 L428.20 596.05 L446.20 596.05 L464.20 596.05 L482.20 596.05 L500.20 596.05 L518.20 596.05 L536.20 596.05 L554.20 596.05 L572.20 596.05 L590.20 596.05 L608.20 596.05 L626.20 596.05 L644.20 596.05 L662.20 596.05 L680.20 596.05 L698.20 596.05 L716.20 596.05 L734.20 596.05 L752.20 596.05 L770.20 596.05 L788.20 596.05 L806.20 596.05 L824.20 596.05 L842.20 596.05 L860.20 596.05 L878.20 596.05 L896.20 596.05 L914.20 596.05 L932.20 596.05 L950.20 596.05 L968.20 596.05 L986.20 596.05 L1004.20 596.05 L1022.20 596.05 L1040.20 596.05 L1058.20 596.05 L1076.20 596.05 L1094.20 596.05 L1112.20 596.05 L1130.20 596.05 L1148.20 596.05 L1166.20 596.05 L1184.20 596.05 L1202.20 596.05" fill="none" stroke="rgba(70,70,80,0.55)" stroke-width="1.4"/><path d="M140.20 570.75 L158.20 570.75 L176.20 570.75 L194.20 570.75 L212.20 570.75 L230.20 570.75 L248.20 570.75 L266.20 570.75 L284.20 570.75 L302.20 570.75 L320.20 570.75 L338.20 570.75 L356.20 570.75 L374.20 570.75 L392.20 570.75 L410.20 570.75 L428.20 570.75 L446.20 570.75 L464.20 570.75 L482.20 570.75 L500.20 570.75 L518.20 570.75 L536.20 570.75 L554.20 570.75 L572.20 570.75 L590.20 570.75 L608.20 570.75 L626.20 570.75 L644.20 570.75 L662.20 570.75 L680.20 570.75 L698.20 570.75 L716.20 570.75 L734.20 570.75 L752.20 570.75 L770.20 570.75 L788.20 570.75 L806.20 570.75 L824.20 570.75 L842.20 570.75 L860.20 570.75 L878.20 570.75 L896.20 570.75 L914.20 570.75 L932.20 570.75 L950.20 570.75 L968.20 570.75 L986.20 570.75 L1004.20 570.75 L1022.20 570.75 L1040.20 570.75 L1058.20 570.75 L1076.20 570.75 L1094.20 570.75 L1112.20 570.75 L1130.20 570.75 L1148.20 570.75 L1166.20 570.75 L1184.20 570.75 L1202.20 570.75" fill="none" stroke="rgba(70,70,80,0.55)" stroke-width="1.4"/><path d="M140.20 558.10 L158.20 558.10 L176.20 558.10 L194.20 558.10 L212.20 558.10 L230.20 558.10 L248.20 558.10 L266.20 558.10 L284.20 558.10 L302.20 558.10 L320.20 558.10 L338.20 558.10 L356.20 558.10 L374.20 558.10 L392.20 558.10 L410.20 558.10 L428.20 558.10 L446.20 558.10 L464.20 558.10 L482.20 558.10 L500.20 558.10 L518.20 558.10 L536.20 558.10 L554.20 558.10 L572.20 558.10 L590.20 558.10 L608.20 558.10 L626.20 558.10 L644.20 558.10 L662.20 558.10 L680.20 558.10 L698.20 558.10 L716.20 558.10 L734.20 558.10 L752.20 558.10 L770.20 558.10 L788.20 558.10 L806.20 558.10 L824.20 558.10 L842.20 558.10 L860.20 558.10 L878.20 558.10 L896.20 558.10 L914.20 558.10 L932.20 558.10 L950.20 558.10 L968.20 558.10 L986.20 558.10 L1004.20 558.10 L1022.20 558.10 L1040.20 558.10 L1058.20 558.10 L1076.20 558.10 L1094.20 558.10 L1112.20 558.10 L1130.20 558.10 L1148.20 558.10 L1166.20 558.10 L1184.20 558.10 L1202.20 558.10" fill="none" stroke="rgba(70,70,80,0.55)" stroke-width="1.4"/><path d="M140.20 545.45 L158.20 545.45 L176.20 545.45 L194.20 545.45 L212.20 545.45 L230.20 545.45 L248.20 545.45 L266.20 545.45 L284.20 545.45 L302.20 545.45 L320.20 545.45 L338.20 545.45 L356.20 545.45 L374.20 545.45 L392.20 545.45 L410.20 545.45 L428.20 545.45 L446.20 545.45 L464.20 545.45 L482.20 545.45 L500.20 545.45 L518.20 545.45 L536.20 545.45 L554.20 545.45 L572.20 545.45 L590.20 545.45 L608.20 545.45 L626.20 545.45 L644.20 545.45 L662.20 545.45 L680.20 545.45 L698.20 545.45 L716.20 545.45 L734.20 545.45 L752.20 545.45 L770.20 545.45 L788.20 545.45 L806.20 545.45 L824.20 545.45 L842.20 545.45 L860.20 545.45 L878.20 545.45 L896.20 545.45 L914.20 545.45 L932.20 545.45 L950.20 545.45 L968.20 545.45 L986.20 545.45 L1004.20 545.45 L1022.20 545.45 L1040.20 545.45 L1058.20 545.45 L1076.20 545.45 L1094.20 545.45 L1112.20 545.45 L1130.20 545.45 L1148.20 545.45 L1166.20 545.45 L1184.20 545.45 L1202.20 545.45" fill="none" stroke="rgba(70,70,80,0.55)" stroke-width="1.4"/><path d="M140.20 482.20 L158.20 482.20 L176.20 482.20 L194.20 482.20 L212.20 482.20 L230.20 482.20 L248.20 482.20 L266.20 482.20 L284.20 482.20 L302.20 482.20 L320.20 482.20 L338.20 482.20 L356.20 482.20 L374.20 482.20 L392.20 482.20 L410.20 482.20 L428.20 482.20 L446.20 482.20 L464.20 482.20 L482.20 482.20 L500.20 482.20 L518.20 482.20 L536.20 482.20 L554.20 482.20 L572.20 482.20 L590.20 482.20 L608.20 482.20 L626.20 482.20 L644.20 482.20 L662.20 482.20 L680.20 482.20 L698.20 482.20 L716.20 482.20 L734.20 482.20 L752.20 482.20 L770.20 482.20 L788.20 482.20 L806.20 482.20 L824.20 482.20 L842.20 482.20 L860.20 482.20 L878.20 482.20 L896.20 482.20 L914.20 482.20 L932.20 482.20 L950.20 482.20 L968.20 482.20 L986.20 482.20 L1004.20 482.20 L1022.20 482.20 L1040.20 469.55 L1058.20 469.55 L1076.20 469.55 L1094.20 469.55 L1112.20 469.55 L1130.20 469.55 L1148.20 469.55 L1166.20 469.55 L1184.20 469.55 L1202.20 469.55" fill="none" stroke="rgba(70,70,80,0.55)" stroke-width="1.4"/><path d="M140.20 444.25 L158.20 444.25 L176.20 444.25 L194.20 444.25 L212.20 444.25 L230.20 444.25 L248.20 444.25 L266.20 444.25 L284.20 444.25 L302.20 444.25 L320.20 444.25 L338.20 444.25 L356.20 444.25 L374.20 444.25 L392.20 444.25 L410.20 444.25 L428.20 444.25 L446.20 444.25 L464.20 444.25 L482.20 444.25 L500.20 444.25 L518.20 444.25 L536.20 444.25 L554.20 444.25 L572.20 444.25 L590.20 444.25 L608.20 444.25 L626.20 444.25 L644.20 444.25 L662.20 444.25 L680.20 444.25 L698.20 444.25 L716.20 444.25 L734.20 444.25 L752.20 444.25 L770.20 444.25 L788.20 444.25 L806.20 444.25 L824.20 444.25 L842.20 444.25 L860.20 444.25 L878.20 444.25 L896.20 444.25 L914.20 444.25 L932.20 444.25 L950.20 444.25 L968.20 444.25 L986.20 444.25 L1004.20 444.25 L1022.20 444.25 L1040.20 444.25 L1058.20 444.25 L1076.20 444.25 L1094.20 444.25 L1112.20 444.25 L1130.20 444.25 L1148.20 444.25 L1166.20 444.25 L1184.20 444.25 L1202.20 444.25" fill="none" stroke="rgba(70,70,80,0.55)" stroke-width="1.4"/><path d="M140.20 418.95 L158.20 418.95 L176.20 418.95 L194.20 418.95 L212.20 418.95 L230.20 418.95 L248.20 418.95 L266.20 418.95 L284.20 418.95 L302.20 418.95 L320.20 418.95 L338.20 418.95 L356.20 418.95 L374.20 418.95 L392.20 418.95 L410.20 418.95 L428.20 418.95 L446.20 418.95 L464.20 418.95 L482.20 418.95 L500.20 418.95 L518.20 418.95 L536.20 418.95 L554.20 418.95 L572.20 418.95 L590.20 418.95 L608.20 418.95 L626.20 418.95 L644.20 418.95 L662.20 418.95 L680.20 418.95 L698.20 418.95 L716.20 418.95 L734.20 418.95 L752.20 418.95 L770.20 418.95 L788.20 418.95 L806.20 418.95 L824.20 418.95 L842.20 418.95 L860.20 418.95 L878.20 418.95 L896.20 418.95 L914.20 418.95 L932.20 418.95 L950.20 418.95 L968.20 418.95 L986.20 418.95 L1004.20 418.95 L1022.20 418.95 L1040.20 418.95 L1058.20 418.95 L1076.20 418.95 L1094.20 418.95 L1112.20 418.95 L1130.20 418.95 L1148.20 418.95 L1166.20 418.95 L1184.20 418.95 L1202.20 418.95" fill="none" stroke="rgba(70,70,80,0.55)" stroke-width="1.4"/><path d="M140.20 317.75 L158.20 317.75 L176.20 317.75 L194.20 317.75 L212.20 317.75 L230.20 317.75 L248.20 317.75 L266.20 317.75 L284.20 317.75 L302.20 317.75 L320.20 317.75 L338.20 317.75 L356.20 317.75 L374.20 317.75 L392.20 317.75 L410.20 317.75 L428.20 317.75 L446.20 317.75 L464.20 317.75 L482.20 317.75 L500.20 317.75 L518.20 317.75 L536.20 317.75 L554.20 317.75 L572.20 317.75 L590.20 317.75 L608.20 317.75 L626.20 317.75 L644.20 317.75 L662.20 317.75 L680.20 317.75 L698.20 317.75 L716.20 317.75 L734.20 317.75 L752.20 317.75 L770.20 317.75 L788.20 317.75 L806.20 317.75 L824.20 317.75 L842.20 317.75 L860.20 317.75 L878.20 317.75 L896.20 317.75 L914.20 317.75 L932.20 317.75 L950.20 317.75 L968.20 317.75 L986.20 317.75 L1004.20 317.75 L1022.20 317.75 L1040.20 317.75 L1058.20 317.75 L1076.20 317.75 L1094.20 317.75 L1112.20 317.75 L1130.20 317.75 L1148.20 317.75 L1166.20 317.75 L1184.20 317.75 L1202.20 317.75" fill="none" stroke="rgba(70,70,80,0.55)" stroke-width="1.4"/><path d="M140.20 279.80 L158.20 279.80 L176.20 279.80 L194.20 279.80 L212.20 279.80 L230.20 279.80 L248.20 279.80 L266.20 279.80 L284.20 279.80 L302.20 279.80 L320.20 279.80 L338.20 279.80 L356.20 279.80 L374.20 279.80 L392.20 279.80 L410.20 279.80 L428.20 279.80 L446.20 279.80 L464.20 279.80 L482.20 279.80 L500.20 279.80 L518.20 279.80 L536.20 279.80 L554.20 279.80 L572.20 279.80 L590.20 279.80 L608.20 279.80 L626.20 279.80 L644.20 279.80 L662.20 279.80 L680.20 279.80 L698.20 279.80 L716.20 279.80 L734.20 279.80 L752.20 279.80 L770.20 279.80 L788.20 279.80 L806.20 279.80 L824.20 279.80 L842.20 279.80 L860.20 279.80 L878.20 279.80 L896.20 279.80 L914.20 279.80 L932.20 279.80 L950.20 279.80 L968.20 279.80 L986.20 279.80 L1004.20 279.80 L1022.20 279.80 L1040.20 279.80 L1058.20 279.80 L1076.20 279.80 L1094.20 279.80 L1112.20 279.80 L1130.20 279.80 L1148.20 279.80 L1166.20 279.80 L1184.20 279.80 L1202.20 279.80" fill="none" stroke="rgba(70,70,80,0.55)" stroke-width="1.4"/></svg>
<div class="t" style="left:18px;width:35.5px;text-align:right;top:614.03px;font-size:12.6px;color:#666">0</div>
<div class="t" style="left:18px;width:35.5px;text-align:right;top:550.78px;font-size:12.6px;color:#666">5</div>
<div class="t" style="left:18px;width:35.5px;text-align:right;top:487.53px;font-size:12.6px;color:#666">10</div>
<div class="t" style="left:18px;width:35.5px;text-align:right;top:424.28px;font-size:12.6px;color:#666">15</div>
<div class="t" style="left:18px;width:35.5px;text-align:right;top:361.03px;font-size:12.6px;color:#666">20</div>
<div class="t" style="left:18px;width:35.5px;text-align:right;top:297.78px;font-size:12.6px;color:#666">25</div>
<div class="t" style="left:18px;width:35.5px;text-align:right;top:234.53px;font-size:12.6px;color:#666">30</div>
<div class="t" style="left:18px;width:35.5px;text-align:right;top:171.28px;font-size:12.6px;color:#666">35</div>
<div class="t" style="left:-16.200000000000003px;top:390.5px;width:80px;height:14px;text-align:center;font-size:14px;color:#666;-webkit-text-stroke:0.15px #666;transform:rotate(-90deg)">Карточки</div>
<div class="t" style="left:54.63px;top:630.56px;width:40px;height:12.8px;text-align:center;font-size:12.8px;color:#666;transform-origin:50% 50%;transform:rotate(-57deg)">59</div>
<div class="t" style="left:72.63px;top:630.56px;width:40px;height:12.8px;text-align:center;font-size:12.8px;color:#666;transform-origin:50% 50%;transform:rotate(-57deg)">58</div>
<div class="t" style="left:90.63px;top:630.56px;width:40px;height:12.8px;text-align:center;font-size:12.8px;color:#666;transform-origin:50% 50%;transform:rotate(-57deg)">57</div>
<div class="t" style="left:108.63px;top:630.56px;width:40px;height:12.8px;text-align:center;font-size:12.8px;color:#666;transform-origin:50% 50%;transform:rotate(-57deg)">56</div>
<div class="t" style="left:126.63px;top:630.56px;width:40px;height:12.8px;text-align:center;font-size:12.8px;color:#666;transform-origin:50% 50%;transform:rotate(-57deg)">55</div>
<div class="t" style="left:144.63px;top:630.56px;width:40px;height:12.8px;text-align:center;font-size:12.8px;color:#666;transform-origin:50% 50%;transform:rotate(-57deg)">54</div>
<div class="t" style="left:162.63px;top:630.56px;width:40px;height:12.8px;text-align:center;font-size:12.8px;color:#666;transform-origin:50% 50%;transform:rotate(-57deg)">53</div>
<div class="t" style="left:180.63px;top:630.56px;width:40px;height:12.8px;text-align:center;font-size:12.8px;color:#666;transform-origin:50% 50%;transform:rotate(-57deg)">52</div>
<div class="t" style="left:198.63px;top:630.56px;width:40px;height:12.8px;text-align:center;font-size:12.8px;color:#666;transform-origin:50% 50%;transform:rotate(-57deg)">51</div>
<div class="t" style="left:216.63px;top:630.56px;width:40px;height:12.8px;text-align:center;font-size:12.8px;color:#666;transform-origin:50% 50%;transform:rotate(-57deg)">50</div>
<div class="t" style="left:234.63px;top:630.56px;width:40px;height:12.8px;text-align:center;font-size:12.8px;color:#666;transform-origin:50% 50%;transform:rotate(-57deg)">49</div>
<div class="t" style="left:252.63px;top:630.56px;width:40px;height:12.8px;text-align:center;font-size:12.8px;color:#666;transform-origin:50% 50%;transform:rotate(-57deg)">48</div>
<div class="t" style="left:270.63px;top:630.56px;width:40px;height:12.8px;text-align:center;font-size:12.8px;color:#666;transform-origin:50% 50%;transform:rotate(-57deg)">47</div>
<div class="t" style="left:288.63px;top:630.56px;width:40px;height:12.8px;text-align:center;font-size:12.8px;color:#666;transform-origin:50% 50%;transform:rotate(-57deg)">46</div>
<div class="t" style="left:306.63px;top:630.56px;width:40px;height:12.8px;text-align:center;font-size:12.8px;color:#666;transform-origin:50% 50%;transform:rotate(-57deg)">45</div>
<div class="t" style="left:324.63px;top:630.56px;width:40px;height:12.8px;text-align:center;font-size:12.8px;color:#666;transform-origin:50% 50%;transform:rotate(-57deg)">44</div>
<div class="t" style="left:342.63px;top:630.56px;width:40px;height:12.8px;text-align:center;font-size:12.8px;color:#666;transform-origin:50% 50%;transform:rotate(-57deg)">43</div>
<div class="t" style="left:360.63px;top:630.56px;width:40px;height:12.8px;text-align:center;font-size:12.8px;color:#666;transform-origin:50% 50%;transform:rotate(-57deg)">42</div>
<div class="t" style="left:378.63px;top:630.56px;width:40px;height:12.8px;text-align:center;font-size:12.8px;color:#666;transform-origin:50% 50%;transform:rotate(-57deg)">41</div>
<div class="t" style="left:396.63px;top:630.56px;width:40px;height:12.8px;text-align:center;font-size:12.8px;color:#666;transform-origin:50% 50%;transform:rotate(-57deg)">40</div>
<div class="t" style="left:414.63px;top:630.56px;width:40px;height:12.8px;text-align:center;font-size:12.8px;color:#666;transform-origin:50% 50%;transform:rotate(-57deg)">39</div>
<div class="t" style="left:432.63px;top:630.56px;width:40px;height:12.8px;text-align:center;font-size:12.8px;color:#666;transform-origin:50% 50%;transform:rotate(-57deg)">38</div>
<div class="t" style="left:450.63px;top:630.56px;width:40px;height:12.8px;text-align:center;font-size:12.8px;color:#666;transform-origin:50% 50%;transform:rotate(-57deg)">37</div>
<div class="t" style="left:468.63px;top:630.56px;width:40px;height:12.8px;text-align:center;font-size:12.8px;color:#666;transform-origin:50% 50%;transform:rotate(-57deg)">36</div>
<div class="t" style="left:486.63px;top:630.56px;width:40px;height:12.8px;text-align:center;font-size:12.8px;color:#666;transform-origin:50% 50%;transform:rotate(-57deg)">35</div>
<div class="t" style="left:504.63px;top:630.56px;width:40px;height:12.8px;text-align:center;font-size:12.8px;color:#666;transform-origin:50% 50%;transform:rotate(-57deg)">34</div>
<div class="t" style="left:522.63px;top:630.56px;width:40px;height:12.8px;text-align:center;font-size:12.8px;color:#666;transform-origin:50% 50%;transform:rotate(-57deg)">33</div>
<div class="t" style="left:540.63px;top:630.56px;width:40px;height:12.8px;text-align:center;font-size:12.8px;color:#666;transform-origin:50% 50%;transform:rotate(-57deg)">32</div>
<div class="t" style="left:558.63px;top:630.56px;width:40px;height:12.8px;text-align:center;font-size:12.8px;color:#666;transform-origin:50% 50%;transform:rotate(-57deg)">31</div>
<div class="t" style="left:576.63px;top:630.56px;width:40px;height:12.8px;text-align:center;font-size:12.8px;color:#666;transform-origin:50% 50%;transform:rotate(-57deg)">30</div>
<div class="t" style="left:594.63px;top:630.56px;width:40px;height:12.8px;text-align:center;font-size:12.8px;color:#666;transform-origin:50% 50%;transform:rotate(-57deg)">29</div>
<div class="t" style="left:612.63px;top:630.56px;width:40px;height:12.8px;text-align:center;font-size:12.8px;color:#666;transform-origin:50% 50%;transform:rotate(-57deg)">28</div>
<div class="t" style="left:630.63px;top:630.56px;width:40px;height:12.8px;text-align:center;font-size:12.8px;color:#666;transform-origin:50% 50%;transform:rotate(-57deg)">27</div>
<div class="t" style="left:648.63px;top:630.56px;width:40px;height:12.8px;text-align:center;font-size:12.8px;color:#666;transform-origin:50% 50%;transform:rotate(-57deg)">26</div>
<div class="t" style="left:666.63px;top:630.56px;width:40px;height:12.8px;text-align:center;font-size:12.8px;color:#666;transform-origin:50% 50%;transform:rotate(-57deg)">25</div>
<div class="t" style="left:684.63px;top:630.56px;width:40px;height:12.8px;text-align:center;font-size:12.8px;color:#666;transform-origin:50% 50%;transform:rotate(-57deg)">24</div>
<div class="t" style="left:702.63px;top:630.56px;width:40px;height:12.8px;text-align:center;font-size:12.8px;color:#666;transform-origin:50% 50%;transform:rotate(-57deg)">23</div>
<div class="t" style="left:720.63px;top:630.56px;width:40px;height:12.8px;text-align:center;font-size:12.8px;color:#666;transform-origin:50% 50%;transform:rotate(-57deg)">22</div>
<div class="t" style="left:738.63px;top:630.56px;width:40px;height:12.8px;text-align:center;font-size:12.8px;color:#666;transform-origin:50% 50%;transform:rotate(-57deg)">21</div>
<div class="t" style="left:756.63px;top:630.56px;width:40px;height:12.8px;text-align:center;font-size:12.8px;color:#666;transform-origin:50% 50%;transform:rotate(-57deg)">20</div>
<div class="t" style="left:774.63px;top:630.56px;width:40px;height:12.8px;text-align:center;font-size:12.8px;color:#666;transform-origin:50% 50%;transform:rotate(-57deg)">19</div>
<div class="t" style="left:792.63px;top:630.56px;width:40px;height:12.8px;text-align:center;font-size:12.8px;color:#666;transform-origin:50% 50%;transform:rotate(-57deg)">18</div>
<div class="t" style="left:810.63px;top:630.56px;width:40px;height:12.8px;text-align:center;font-size:12.8px;color:#666;transform-origin:50% 50%;transform:rotate(-57deg)">17</div>
<div class="t" style="left:828.63px;top:630.56px;width:40px;height:12.8px;text-align:center;font-size:12.8px;color:#666;transform-origin:50% 50%;transform:rotate(-57deg)">16</div>
<div class="t" style="left:846.63px;top:630.56px;width:40px;height:12.8px;text-align:center;font-size:12.8px;color:#666;transform-origin:50% 50%;transform:rotate(-57deg)">15</div>
<div class="t" style="left:864.63px;top:630.56px;width:40px;height:12.8px;text-align:center;font-size:12.8px;color:#666;transform-origin:50% 50%;transform:rotate(-57deg)">14</div>
<div class="t" style="left:882.63px;top:630.56px;width:40px;height:12.8px;text-align:center;font-size:12.8px;color:#666;transform-origin:50% 50%;transform:rotate(-57deg)">13</div>
<div class="t" style="left:900.63px;top:630.56px;width:40px;height:12.8px;text-align:center;font-size:12.8px;color:#666;transform-origin:50% 50%;transform:rotate(-57deg)">12</div>
<div class="t" style="left:918.63px;top:630.56px;width:40px;height:12.8px;text-align:center;font-size:12.8px;color:#666;transform-origin:50% 50%;transform:rotate(-57deg)">11</div>
<div class="t" style="left:936.63px;top:630.56px;width:40px;height:12.8px;text-align:center;font-size:12.8px;color:#666;transform-origin:50% 50%;transform:rotate(-57deg)">10</div>
<div class="t" style="left:954.63px;top:630.56px;width:40px;height:12.8px;text-align:center;font-size:12.8px;color:#666;transform-origin:50% 50%;transform:rotate(-57deg)">9</div>
<div class="t" style="left:972.63px;top:630.56px;width:40px;height:12.8px;text-align:center;font-size:12.8px;color:#666;transform-origin:50% 50%;transform:rotate(-57deg)">8</div>
<div class="t" style="left:990.63px;top:630.56px;width:40px;height:12.8px;text-align:center;font-size:12.8px;color:#666;transform-origin:50% 50%;transform:rotate(-57deg)">7</div>
<div class="t" style="left:1008.63px;top:630.56px;width:40px;height:12.8px;text-align:center;font-size:12.8px;color:#666;transform-origin:50% 50%;transform:rotate(-57deg)">6</div>
<div class="t" style="left:1026.63px;top:630.56px;width:40px;height:12.8px;text-align:center;font-size:12.8px;color:#666;transform-origin:50% 50%;transform:rotate(-57deg)">5</div>
<div class="t" style="left:1044.63px;top:630.56px;width:40px;height:12.8px;text-align:center;font-size:12.8px;color:#666;transform-origin:50% 50%;transform:rotate(-57deg)">4</div>
<div class="t" style="left:1062.63px;top:630.56px;width:40px;height:12.8px;text-align:center;font-size:12.8px;color:#666;transform-origin:50% 50%;transform:rotate(-57deg)">3</div>
<div class="t" style="left:1080.63px;top:630.56px;width:40px;height:12.8px;text-align:center;font-size:12.8px;color:#666;transform-origin:50% 50%;transform:rotate(-57deg)">2</div>
<div class="t" style="left:1098.63px;top:630.56px;width:40px;height:12.8px;text-align:center;font-size:12.8px;color:#666;transform-origin:50% 50%;transform:rotate(-57deg)">1</div>
<div class="t" style="left:1116.63px;top:630.56px;width:40px;height:12.8px;text-align:center;font-size:12.8px;color:#666;transform-origin:50% 50%;transform:rotate(-57deg)">0</div>
<div class="t" style="left:410.00px;top:134.55px;font-size:20.5px;color:#222;font-weight:400;letter-spacing:0.58px;-webkit-text-stroke:0.55px #222">Накопительная диаграмма потока</div>
<div class="a" style="left:174.25px;top:666.25px;width:12.5px;height:12.5px;border-radius:50%;background:#7BB3EC"></div>
<div class="t" style="left:194.50px;top:667.62px;font-size:12.5px;color:#3a3a3a;font-weight:400;letter-spacing:0.45px;-webkit-text-stroke:0.2px #3a3a3a">Роадмап (расширенный) / Очередь</div>
<div class="a" style="left:174.25px;top:681.85px;width:12.5px;height:12.5px;border-radius:50%;background:#F59E5E"></div>
<div class="t" style="left:194.50px;top:683.22px;font-size:12.5px;color:#3a3a3a;font-weight:400;letter-spacing:0.45px;-webkit-text-stroke:0.2px #3a3a3a">Роадмап / Очередь</div>
<div class="a" style="left:174.25px;top:697.45px;width:12.5px;height:12.5px;border-radius:50%;background:#E0CF4E"></div>
<div class="t" style="left:194.50px;top:698.82px;font-size:12.5px;color:#3a3a3a;font-weight:400;letter-spacing:0.45px;-webkit-text-stroke:0.2px #3a3a3a">Роадмап / Готово</div>
<div class="a" style="left:174.25px;top:713.05px;width:12.5px;height:12.5px;border-radius:50%;background:#8FE3DC"></div>
<div class="t" style="left:194.50px;top:714.42px;font-size:12.5px;color:#3a3a3a;font-weight:400;letter-spacing:0.45px;-webkit-text-stroke:0.2px #3a3a3a">Product Discovery / <span style="display:inline-block;position:relative;width:16px;height:1px;vertical-align:baseline"><svg width="13" height="13" viewBox="0 0 13 13" style="position:absolute;left:0;top:-10.5px"><circle cx="5.2" cy="5.2" r="3.9" fill="#EEF3F8" stroke="#8A9099" stroke-width="1.3"/><path d="M8 8 L11.6 11.6" stroke="#2F3338" stroke-width="2.4" stroke-linecap="round"/></svg></span>Исследуем</div>
<div class="a" style="left:174.25px;top:728.65px;width:12.5px;height:12.5px;border-radius:50%;background:#7EE26D"></div>
<div class="t" style="left:194.50px;top:730.02px;font-size:12.5px;color:#3a3a3a;font-weight:400;letter-spacing:0.45px;-webkit-text-stroke:0.2px #3a3a3a">Delivery / <span style="display:inline-block;position:relative;width:16px;height:1px;vertical-align:baseline"><svg width="13" height="13" viewBox="0 0 13 13" style="position:absolute;left:0;top:-10.5px"><defs><linearGradient id="gp" x1="0" y1="0" x2="0" y2="1"><stop offset="0" stop-color="#9DBBE0"/><stop offset="1" stop-color="#4C7FBF"/></linearGradient></defs><rect x="0.3" y="0.5" width="12.4" height="12.4" rx="2.2" fill="url(#gp)"/><path d="M6.5 3.2 L10 9.2 H3Z" fill="#fff"/></svg></span>В приоритизации</div>
<div class="a" style="left:174.25px;top:744.25px;width:12.5px;height:12.5px;border-radius:50%;background:#EE5580"></div>
<div class="t" style="left:194.50px;top:745.62px;font-size:12.5px;color:#3a3a3a;font-weight:400;letter-spacing:0.45px;-webkit-text-stroke:0.2px #3a3a3a">Delivery / <span style="display:inline-block;position:relative;width:16px;height:1px;vertical-align:baseline"><svg width="13" height="13" viewBox="0 0 13 13" style="position:absolute;left:0;top:-10.5px"><path d="M1.8 11.6 L9.6 2.6" stroke="#3BAA3B" stroke-width="2.4" stroke-linecap="round"/><path d="M9.6 2.6 L11.4 0.6" stroke="#C8D8C8" stroke-width="1.6"/></svg></span>На тестировании</div>
<div class="a" style="left:454.05px;top:666.25px;width:12.5px;height:12.5px;border-radius:50%;background:#3E3D44"></div>
<div class="t" style="left:474.30px;top:667.62px;font-size:12.5px;color:#3a3a3a;font-weight:400;letter-spacing:0.45px;-webkit-text-stroke:0.2px #3a3a3a">Роадмап (расширенный) / В работе</div>
<div class="a" style="left:454.05px;top:681.85px;width:12.5px;height:12.5px;border-radius:50%;background:#7B7BE8"></div>
<div class="t" style="left:474.30px;top:683.22px;font-size:12.5px;color:#3a3a3a;font-weight:400;letter-spacing:0.45px;-webkit-text-stroke:0.2px #3a3a3a">Роадмап / В работе</div>
<div class="a" style="left:454.05px;top:697.45px;width:12.5px;height:12.5px;border-radius:50%;background:#2D8B88"></div>
<div class="t" style="left:474.30px;top:698.82px;font-size:12.5px;color:#3a3a3a;font-weight:400;letter-spacing:0.45px;-webkit-text-stroke:0.2px #3a3a3a">Product Discovery / <span style="display:inline-block;position:relative;width:16px;height:1px;vertical-align:baseline"><svg width="13" height="13" viewBox="0 0 13 13" style="position:absolute;left:0;top:-10.5px"><circle cx="6.5" cy="5" r="3.9" fill="#F8EBAF"/><path d="M4.6 7.5 h3.8 v2.2 h-3.8z" fill="#F8EBAF"/><rect x="4.9" y="9.6" width="3.2" height="2.4" rx="0.6" fill="#A9A9A9"/></svg></span>Идеи</div>
<div class="a" style="left:454.05px;top:713.05px;width:12.5px;height:12.5px;border-radius:50%;background:#7BB3EC"></div>
<div class="t" style="left:474.30px;top:714.42px;font-size:12.5px;color:#3a3a3a;font-weight:400;letter-spacing:0.45px;-webkit-text-stroke:0.2px #3a3a3a">Product Discovery / <span style="display:inline-block;position:relative;width:16px;height:1px;vertical-align:baseline"><svg width="13" height="13" viewBox="0 0 13 13" style="position:absolute;left:0;top:-10.5px"><rect x="0.3" y="0.3" width="12.4" height="12.4" rx="2.4" fill="#3DB23D"/><path d="M2.9 6.6 L5.4 9.3 L10.2 3.2" stroke="#fff" stroke-width="1.7" fill="none" stroke-linecap="round" stroke-linejoin="round"/></svg></span>Готово к оценке</div>
<div class="a" style="left:454.05px;top:728.65px;width:12.5px;height:12.5px;border-radius:50%;background:#F59E5E"></div>
<div class="t" style="left:474.30px;top:730.02px;font-size:12.5px;color:#3a3a3a;font-weight:400;letter-spacing:0.45px;-webkit-text-stroke:0.2px #3a3a3a">Delivery / <span style="display:inline-block;position:relative;width:16px;height:1px;vertical-align:baseline"><svg width="13" height="13" viewBox="0 0 13 13" style="position:absolute;left:0;top:-10.5px"><ellipse cx="6.7" cy="5.6" rx="5.6" ry="4.8" fill="#F4F4F4" stroke="#C9C9C9" stroke-width="0.9"/><path d="M2.6 8.8 L1.8 12 L5 10" fill="#F4F4F4" stroke="#C9C9C9" stroke-width="0.9"/><circle cx="4.4" cy="5.6" r=".6" fill="#9a9a9a"/><circle cx="6.7" cy="5.6" r=".6" fill="#9a9a9a"/><circle cx="9" cy="5.6" r=".6" fill="#9a9a9a"/></svg></span>В проработке</div>
<div class="a" style="left:454.05px;top:744.25px;width:12.5px;height:12.5px;border-radius:50%;background:#E0CF4E"></div>
<div class="t" style="left:474.30px;top:745.62px;font-size:12.5px;color:#3a3a3a;font-weight:400;letter-spacing:0.45px;-webkit-text-stroke:0.2px #3a3a3a">Delivery / <span style="display:inline-block;position:relative;width:16px;height:1px;vertical-align:baseline"><svg width="13" height="13" viewBox="0 0 13 13" style="position:absolute;left:0;top:-10.5px"><g transform="translate(-0.5 0.5) rotate(45 6.5 6.5)"><path d="M4.4 9.3 L6.5 14 L8.6 9.3Z" fill="#F7C531"/><path d="M4.3 5.6 L1.6 10.4 L4.6 10Z M8.7 5.6 L11.4 10.4 L8.4 10Z" fill="#E2352B"/><path d="M6.5 -0.6 C9.3 1.5 9.5 5 9.1 9.8 L3.9 9.8 C3.5 5 3.7 1.5 6.5 -0.6Z" fill="#7FB0E0"/><path d="M6.5 -0.6 C9.3 1.5 9.5 5 9.1 9.8 L6.5 9.8Z" fill="#B9CFE6"/><circle cx="6.5" cy="4.4" r="1.4" fill="#5A2B35"/></g></svg></span>Готово к релизу</div>
<div class="a" style="left:734.05px;top:666.25px;width:12.5px;height:12.5px;border-radius:50%;background:#7EE26D"></div>
<div class="t" style="left:754.30px;top:667.62px;font-size:12.5px;color:#3a3a3a;font-weight:400;letter-spacing:0.45px;-webkit-text-stroke:0.2px #3a3a3a">Роадмап (расширенный) / Готово</div>
<div class="a" style="left:734.05px;top:681.85px;width:12.5px;height:12.5px;border-radius:50%;background:#EE5580"></div>
<div class="t" style="left:754.30px;top:683.22px;font-size:12.5px;color:#3a3a3a;font-weight:400;letter-spacing:0.45px;-webkit-text-stroke:0.2px #3a3a3a">Роадмап / Согласование</div>
<div class="a" style="left:734.05px;top:697.45px;width:12.5px;height:12.5px;border-radius:50%;background:#EE5555"></div>
<div class="t" style="left:754.30px;top:698.82px;font-size:12.5px;color:#3a3a3a;font-weight:400;letter-spacing:0.45px;-webkit-text-stroke:0.2px #3a3a3a">Product Discovery / <span style="display:inline-block;position:relative;width:16px;height:1px;vertical-align:baseline"><svg width="13" height="13" viewBox="0 0 13 13" style="position:absolute;left:0;top:-10.5px"><rect x="1.5" y="0.8" width="10" height="12" rx="1.3" fill="#C69E6A"/><rect x="2.7" y="2.2" width="7.6" height="9.6" fill="#EDEDED"/><rect x="4.5" y="0.2" width="4" height="2" rx="0.6" fill="#A8A8A8"/></svg></span>Гипотезы</div>
<div class="a" style="left:734.05px;top:713.05px;width:12.5px;height:12.5px;border-radius:50%;background:#3E3D44"></div>
<div class="t" style="left:754.30px;top:714.42px;font-size:12.5px;color:#3a3a3a;font-weight:400;letter-spacing:0.45px;-webkit-text-stroke:0.2px #3a3a3a">Delivery / <span style="display:inline-block;position:relative;width:16px;height:1px;vertical-align:baseline"><svg width="13" height="13" viewBox="0 0 13 13" style="position:absolute;left:0;top:-10.5px"><rect x="0.5" y="3.2" width="12" height="9.3" rx="0.8" fill="#E9C796"/><rect x="2.6" y="0.6" width="2.4" height="3.2" fill="#F29A4A"/><rect x="5.3" y="0.6" width="2.4" height="3.2" fill="#8C8CE0"/><rect x="8" y="0.6" width="2.4" height="3.2" fill="#E55A5A"/></svg></span>Backlog</div>
<div class="a" style="left:734.05px;top:728.65px;width:12.5px;height:12.5px;border-radius:50%;background:#7B7BE8"></div>
<div class="t" style="left:754.30px;top:730.02px;font-size:12.5px;color:#3a3a3a;font-weight:400;letter-spacing:0.45px;-webkit-text-stroke:0.2px #3a3a3a">Delivery / <span style="display:inline-block;position:relative;width:16px;height:1px;vertical-align:baseline"><svg width="13" height="13" viewBox="0 0 13 13" style="position:absolute;left:0;top:-10.5px"><path d="M2.2 11.6 L10.2 2.6" stroke="#7F8A96" stroke-width="1.6"/><path d="M8.4 1 L11.8 3.6 L10 5.2Z" fill="#A8B2BC"/><path d="M2.4 1.6 L11.4 11.8" stroke="#2A2A2A" stroke-width="1.7"/><path d="M0.8 2.6 L3 0.6 L4.4 2.6 L2.6 4Z" fill="#9AA4AE"/></svg></span>В разработке</div>
<div class="a" style="left:734.05px;top:744.25px;width:12.5px;height:12.5px;border-radius:50%;background:#2D8B88"></div>
<div class="t" style="left:754.30px;top:745.62px;font-size:12.5px;color:#3a3a3a;font-weight:400;letter-spacing:0.45px;-webkit-text-stroke:0.2px #3a3a3a">Delivery / <span style="display:inline-block;position:relative;width:16px;height:1px;vertical-align:baseline"><svg width="13" height="13" viewBox="0 0 13 13" style="position:absolute;left:0;top:-10.5px"><rect x="0.3" y="0.3" width="12.4" height="12.4" rx="2.4" fill="#3DB23D"/><path d="M2.9 6.6 L5.4 9.3 L10.2 3.2" stroke="#fff" stroke-width="1.7" fill="none" stroke-linecap="round" stroke-linejoin="round"/></svg></span>В проде</div>
<svg style="left:1198.50px;top:398.50px" width="24" height="24" viewBox="0 0 24 24"><path d="M19 3H5c-1.11 0-2 .9-2 2v14c0 1.1.89 2 2 2h14c1.11 0 2-.9 2-2V5c0-1.1-.89-2-2-2zm-9 14l-5-5 1.41-1.41L10 14.17l7.59-7.59L19 8l-9 9z" fill="#9C27B0"/></svg>
<div class="t" style="left:1227.30px;top:399.48px;font-size:16.8px;color:#333;font-weight:400;letter-spacing:0px;-webkit-text-stroke:0.2px #333">Product Discovery</div>
<svg style="left:1431.00px;top:395.50px" width="24" height="24" viewBox="0 0 24 24"><path d="M7 10l5 5 5-5z" fill="#777"/></svg>
<svg style="left:1198.50px;top:428.50px" width="24" height="24" viewBox="0 0 24 24"><path d="M19 3H5c-1.11 0-2 .9-2 2v14c0 1.1.89 2 2 2h14c1.11 0 2-.9 2-2V5c0-1.1-.89-2-2-2zm-9 14l-5-5 1.41-1.41L10 14.17l7.59-7.59L19 8l-9 9z" fill="#9C27B0"/></svg>
<div class="t" style="left:1227.30px;top:433.38px;font-size:16.8px;color:#333;font-weight:400;letter-spacing:0px;-webkit-text-stroke:0.2px #333">Delivery</div>
<svg style="left:1431.00px;top:429.30px" width="24" height="24" viewBox="0 0 24 24"><path d="M7 10l5 5 5-5z" fill="#777"/></svg>
<svg style="left:1198.50px;top:470.00px" width="24" height="24" viewBox="0 0 24 24"><path d="M19 3H5c-1.11 0-2 .9-2 2v14c0 1.1.89 2 2 2h14c1.11 0 2-.9 2-2V5c0-1.1-.89-2-2-2zm-9 14l-5-5 1.41-1.41L10 14.17l7.59-7.59L19 8l-9 9z" fill="#9C27B0"/></svg>
<div class="t" style="left:1227.30px;top:462.68px;font-size:16.8px;color:#333;font-weight:400;letter-spacing:0px;-webkit-text-stroke:0.2px #333">Роадмап</div>
<div class="t" style="left:1227.30px;top:486.68px;font-size:16.8px;color:#333;font-weight:400;letter-spacing:0px;-webkit-text-stroke:0.2px #333">(расширенный)</div>
<svg style="left:1431.00px;top:470.50px" width="24" height="24" viewBox="0 0 24 24"><path d="M7 10l5 5 5-5z" fill="#777"/></svg>
<div class="t" style="left:1194.00px;top:530.24px;font-size:12px;color:#333;font-weight:400;letter-spacing:0.1px;-webkit-text-stroke:0.25px #333">Ось Y</div>
<svg style="left:1195.30px;top:551.30px" width="24" height="24" viewBox="0 0 24 24"><path d="M12 7c-2.76 0-5 2.24-5 5s2.24 5 5 5 5-2.24 5-5-2.24-5-5-5zm0-5C6.48 2 2 6.48 2 12s4.48 10 10 10 10-4.48 10-10S17.52 2 12 2zm0 18c-4.42 0-8-3.58-8-8s3.58-8 8-8 8 3.58 8 8-3.58 8-8 8z" fill="#BDBDBD"/></svg>
<div class="t" style="left:1232.70px;top:555.56px;font-size:17.3px;color:#A8A8A8;font-weight:400;letter-spacing:0px;-webkit-text-stroke:0.2px #A8A8A8">Кол-во карточек</div>
<svg style="left:1195.30px;top:584.50px" width="24" height="24" viewBox="0 0 24 24"><path d="M12 2C6.48 2 2 6.48 2 12s4.48 10 10 10 10-4.48 10-10S17.52 2 12 2zm0 18c-4.42 0-8-3.58-8-8s3.58-8 8-8 8 3.58 8 8-3.58 8-8 8z" fill="#BDBDBD"/></svg>
<div class="t" style="left:1232.70px;top:588.96px;font-size:17.3px;color:#A8A8A8;font-weight:400;letter-spacing:0px;-webkit-text-stroke:0.2px #A8A8A8">Размер карточек</div>
<div class="a" style="left:1194.20px;top:638.40px;width:272.60px;height:41.00px;border:1px solid #CFCFCF;border-radius:4px"></div>
<div class="t" style="left:1208.90px;top:651.59px;font-size:17.5px;color:#555;font-weight:400;letter-spacing:0px;-webkit-text-stroke:0.2px #555">Метки</div>
<svg style="left:1433.60px;top:647.00px" width="24" height="24" viewBox="0 0 24 24"><path d="M7 10l5 5 5-5z" fill="#666"/></svg>
<div class="a" style="left:1188px;top:694px;width:285px;height:29.600000000000023px;overflow:hidden"><div class="a" style="left:6.2px;top:11.1px;width:272.6px;height:41px;border:1px solid #CFCFCF;border-radius:4px"></div><div class="a" style="left:16.7px;top:5px;width:98px;height:10px;background:#fff"></div><div class="t" style="left:20.9px;top:4.40px;font-size:13px;color:#666">Типы карточек</div><div class="t" style="left:20.9px;top:22.86px;font-size:17.3px;color:#999">Все</div><svg style="left:245.5999999999999px;top:18px" width="24" height="24" viewBox="0 0 24 24"><path d="M7 10l5 5 5-5z" fill="#666"/></svg></div>
<div class="a" style="left:1202.40px;top:733.10px;width:256.20px;height:50.00px;border:1px solid #CFCFCF;border-radius:4px;background:#fff"></div>
<div class="t" style="left:1292.00px;top:745.05px;font-size:14px;color:#222;font-weight:400;letter-spacing:0.5px;-webkit-text-stroke:0.5px #222">ПОКАЗАТЬ</div>
<div class="a" style="left:1186.30px;top:65.80px;width:289.50px;height:334.50px;border:2.8px solid #9E24B4;border-radius:13px;background:#fff"></div>
<svg style="left:1193.90px;top:76.50px" width="25" height="25" viewBox="0 0 24 24"><path d="M10 18h4v-2h-4v2zM3 6v2h18V6H3zm3 7h12v-2H6v2z" fill="#222"/></svg>
<div class="t" style="left:1227.00px;top:78.78px;font-size:21.4px;color:#222;font-weight:400;letter-spacing:0px;-webkit-text-stroke:0.2px #222">Фильтр</div>
<div class="a" style="left:1194.50px;top:120.20px;width:272.00px;height:39.60px;border:2px solid #9C27B0;border-radius:4px"></div>
<div class="a" style="left:1204.70px;top:117.00px;width:54.30px;height:6.00px;background:#fff"></div>
<div class="t" style="left:1208.90px;top:114.20px;font-size:12.4px;color:#9C27B0;font-weight:400;letter-spacing:0px;-webkit-text-stroke:0.2px #9C27B0">Период</div>
<div class="t" style="left:1209.00px;top:131.96px;font-size:17.3px;color:#222;font-weight:400;letter-spacing:0px;-webkit-text-stroke:0.2px #222">последний час (поминутно)</div>
<svg style="left:1435.30px;top:128.00px" width="24" height="24" viewBox="0 0 24 24"><path d="M7 14l5-5 5 5z" fill="#555"/></svg>
<div class="a" style="left:1194.20px;top:169.60px;width:272.60px;height:226.00px;background:#fff;box-shadow:0 3px 5px -1px rgba(0,0,0,.2),0 6px 10px 0 rgba(0,0,0,.14),0 1px 18px 0 rgba(0,0,0,.12)"></div>
<div class="a" style="left:1194.20px;top:169.60px;width:272.60px;height:37.30px;background:#F5EDF8"></div>
<div class="t" style="left:1210.90px;top:180.64px;font-size:17.2px;color:#222;font-weight:400;letter-spacing:0px;-webkit-text-stroke:0.2px #222">последний час (поминутно)</div>
<div class="t" style="left:1210.90px;top:217.94px;font-size:17.2px;color:#222;font-weight:400;letter-spacing:0px;-webkit-text-stroke:0.2px #222">7 дней</div>
<div class="t" style="left:1210.90px;top:255.24px;font-size:17.2px;color:#222;font-weight:400;letter-spacing:0px;-webkit-text-stroke:0.2px #222">14 дней</div>
<div class="t" style="left:1210.90px;top:292.54px;font-size:17.2px;color:#222;font-weight:400;letter-spacing:0px;-webkit-text-stroke:0.2px #222">месяц</div>
<div class="t" style="left:1210.90px;top:329.84px;font-size:17.2px;color:#222;font-weight:400;letter-spacing:0px;-webkit-text-stroke:0.2px #222">3 месяца</div>
<div class="t" style="left:1210.90px;top:367.14px;font-size:17.2px;color:#222;font-weight:400;letter-spacing:0px;-webkit-text-stroke:0.2px #222">выбранные даты</div>
</div></body></html>
